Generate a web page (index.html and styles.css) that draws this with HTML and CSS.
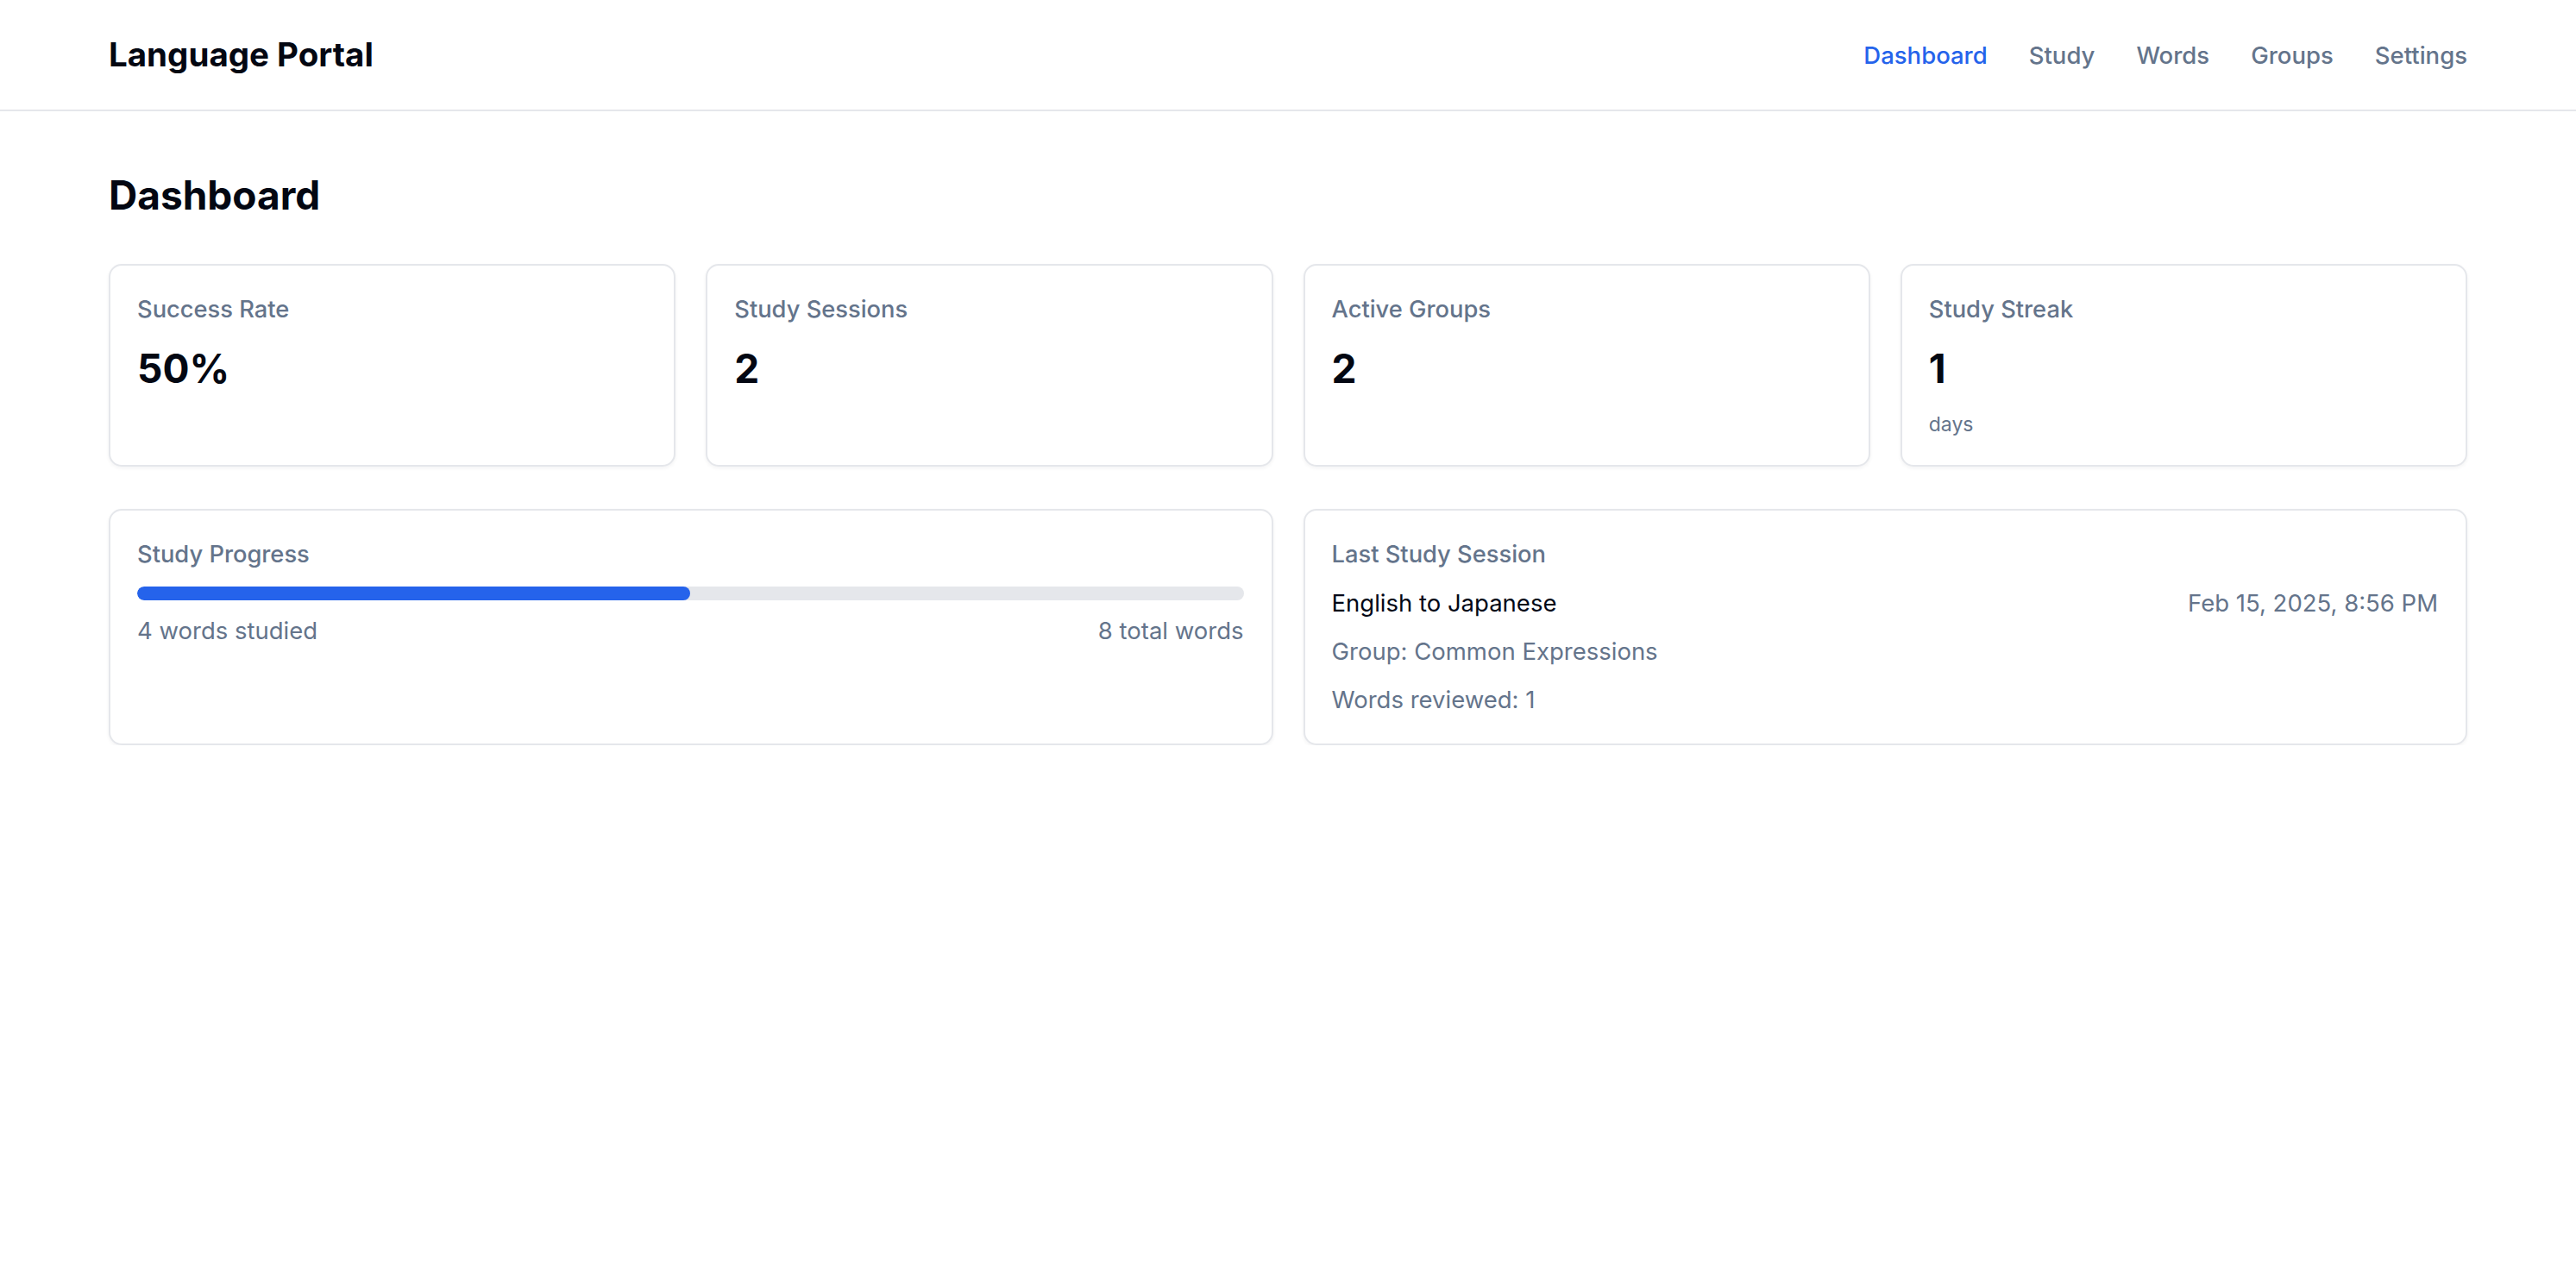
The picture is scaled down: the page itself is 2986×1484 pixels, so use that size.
FILE: index.html
```html
<!DOCTYPE html>
<html lang="en">
<head>
<meta charset="utf-8">
<title>Language Portal</title>
<link rel="stylesheet" href="styles.css">
</head>
<body>
<header class="topbar">
  <div class="brand">Language Portal</div>
  <nav class="nav">
    <a class="nav-link active" href="#">Dashboard</a>
    <a class="nav-link" href="#">Study</a>
    <a class="nav-link" href="#">Words</a>
    <a class="nav-link" href="#">Groups</a>
    <a class="nav-link" href="#">Settings</a>
  </nav>
</header>
<main class="main">
  <h1 class="page-title">Dashboard</h1>
  <section class="stats">
    <div class="card">
      <div class="label">Success Rate</div>
      <div class="value">50%</div>
    </div>
    <div class="card">
      <div class="label">Study Sessions</div>
      <div class="value">2</div>
    </div>
    <div class="card">
      <div class="label">Active Groups</div>
      <div class="value">2</div>
    </div>
    <div class="card">
      <div class="label">Study Streak</div>
      <div class="value">1</div>
      <div class="unit">days</div>
    </div>
  </section>
  <section class="details">
    <div class="card">
      <div class="label">Study Progress</div>
      <div class="track"><div class="fill" style="width: 50%"></div></div>
      <div class="progress-meta">
        <span>4 words studied</span>
        <span>8 total words</span>
      </div>
    </div>
    <div class="card">
      <div class="label">Last Study Session</div>
      <div class="session">
        <div class="session-row">
          <span class="session-name">English to Japanese</span>
          <span class="muted">Feb 15, 2025, 8:56 PM</span>
        </div>
        <div class="muted">Group: Common Expressions</div>
        <div class="muted">Words reviewed: 1</div>
      </div>
    </div>
  </section>
</main>
</body>
</html>
```
FILE: styles.css
```css
* { box-sizing: border-box; }
html, body { margin: 0; padding: 0; background: #ffffff; }
body {
  font-family: Inter, "Noto Sans", "Liberation Sans", sans-serif;
  color: #020817;
}
.topbar {
  height: 129px;
  border-bottom: 2px solid #e5e7eb;
  display: flex;
  align-items: center;
  justify-content: space-between;
  padding: 0 126px;
}
.brand {
  font-size: 38.5px;
  line-height: 53px;
  font-weight: 700;
  color: #030712;
}
.nav {
  display: flex;
  align-items: center;
  gap: 48px;
}
.nav-link {
  font-size: 27.5px;
  line-height: 38px;
  font-weight: 500;
  color: #64748b;
  text-decoration: none;
}
.nav-link.active { color: #2563eb; }
.main { padding: 0 126px; }
.page-title {
  margin: 67px 0 0;
  font-size: 46px;
  line-height: 61px;
  font-weight: 700;
  color: #030712;
}
.stats {
  margin-top: 49px;
  display: grid;
  grid-template-columns: repeat(4, 1fr);
  column-gap: 35px;
}
.details {
  margin-top: 49px;
  display: grid;
  grid-template-columns: repeat(2, 1fr);
  column-gap: 35px;
}
.card {
  border: 2px solid #e5e7eb;
  border-radius: 15px;
  padding: 32px 32px 32px 31px;
  background: #ffffff;
  box-shadow: 0 2px 4px rgba(15, 23, 42, 0.05);
}
.label {
  font-size: 27.3px;
  line-height: 38px;
  font-weight: 500;
  color: #64748b;
}
.value {
  margin-top: 19px;
  font-size: 46px;
  line-height: 61px;
  font-weight: 700;
  color: #030712;
}
.unit {
  margin-top: 19px;
  font-size: 23px;
  line-height: 30px;
  color: #64748b;
}
.track {
  margin-top: 18px;
  height: 16px;
  border-radius: 999px;
  background: #e5e7eb;
  overflow: hidden;
}
.fill {
  height: 100%;
  border-radius: 999px;
  background: #2563eb;
}
.progress-meta {
  margin-top: 16px;
  display: flex;
  justify-content: space-between;
  font-size: 27.5px;
  line-height: 38px;
  color: #64748b;
}
.session {
  margin-top: 18px;
  display: flex;
  flex-direction: column;
  gap: 18px;
  font-size: 27.5px;
  line-height: 38px;
}
.session-row {
  display: flex;
  justify-content: space-between;
}
.session-name { color: #020817; }
.muted { color: #64748b; }
```
